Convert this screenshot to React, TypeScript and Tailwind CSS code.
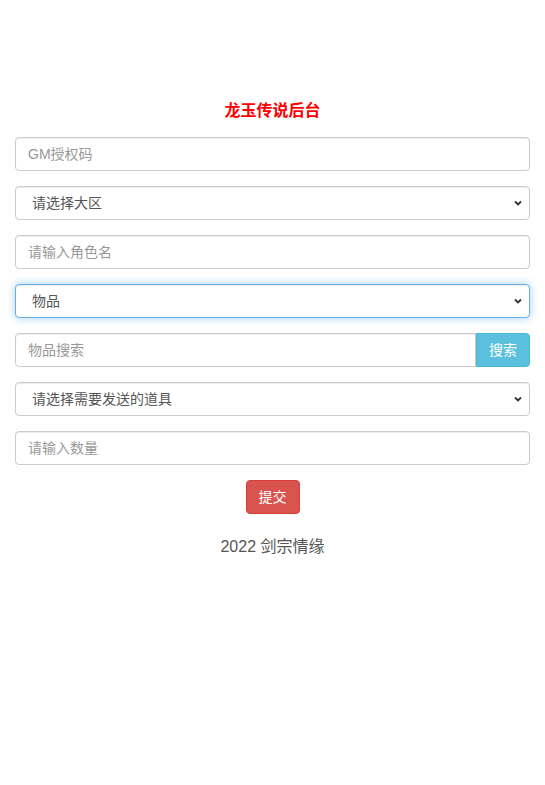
import { useState } from "react";

const FONT = { fontFamily: '"Liberation Sans", "Noto Sans CJK SC", sans-serif' };

function Chevron() {
  return (
    <svg className="pointer-events-none absolute right-[7px] top-1/2 -translate-y-1/2" width="10" height="10" viewBox="0 0 10 10">
      <path d="M2 3.5 L5 6.5 L8 3.5" fill="none" stroke="#333" strokeWidth="1.8" />
    </svg>
  );
}

function Select({ value, options, focused }: { value: string; options: string[]; focused?: boolean }) {
  const [v, setV] = useState(value);
  return (
    <div className="relative">
      <select
        value={v}
        onChange={(e) => setV(e.target.value)}
        className={
          "block w-full h-[34px] appearance-none rounded bg-white pl-4 pr-8 text-[14px] text-[#555] outline-none border " +
          (focused
            ? "border-[#66afe9] shadow-[inset_0_1px_1px_rgba(0,0,0,0.075),0_0_8px_rgba(102,175,233,0.6)]"
            : "border-[#ccc] shadow-[inset_0_1px_1px_rgba(0,0,0,0.075)]")
        }
      >
        {options.map((o) => (
          <option key={o} value={o}>{o}</option>
        ))}
      </select>
      <Chevron />
    </div>
  );
}

function Input({ placeholder }: { placeholder: string }) {
  return (
    <input
      placeholder={placeholder}
      className="block w-full h-[34px] rounded border border-[#ccc] bg-white px-3 text-[14px] text-[#555] placeholder:text-[#999] outline-none shadow-[inset_0_1px_1px_rgba(0,0,0,0.075)]"
    />
  );
}

export default function App() {
  return (
    <div className="min-h-screen bg-white px-[15px] pt-[101px]" style={FONT}>
      <h4 className="text-center text-[16px] leading-[20px] font-bold text-[#f00] mb-[16px]">龙玉传说后台</h4>

      <div className="flex flex-col gap-[15px]">
        <Input placeholder="GM授权码" />
        <Select value="请选择大区" options={["请选择大区"]} />
        <Input placeholder="请输入角色名" />
        <Select value="物品" options={["物品", "装备", "货币"]} focused />
        <div className="flex">
          <input
            placeholder="物品搜索"
            className="block flex-1 min-w-0 h-[34px] rounded-l border border-[#ccc] bg-white px-3 text-[14px] text-[#555] placeholder:text-[#999] outline-none shadow-[inset_0_1px_1px_rgba(0,0,0,0.075)]"
          />
          <button className="h-[34px] w-[54px] rounded-r border border-[#46b8da] bg-[#5bc0de] text-[14px] text-white">搜索</button>
        </div>
        <Select value="请选择需要发送的道具" options={["请选择需要发送的道具"]} />
        <Input placeholder="请输入数量" />
      </div>

      <div className="mt-[15px] flex justify-center">
        <button className="h-[34px] w-[54px] rounded border border-[#d43f3a] bg-[#d9534f] text-[14px] text-white">提交</button>
      </div>

      <p className="mt-[22px] text-center text-[16px] leading-[22px] text-[#555]">2022 剑宗情缘</p>
    </div>
  );
}
